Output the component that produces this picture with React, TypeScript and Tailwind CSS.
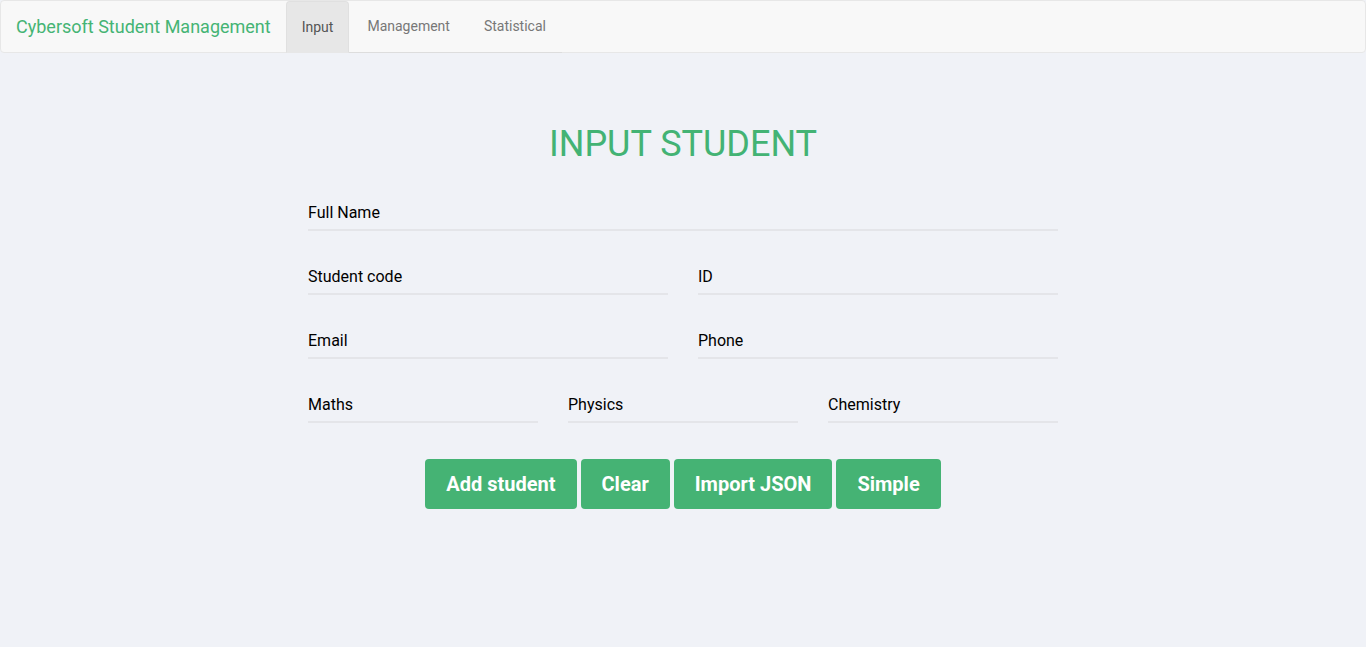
export default function App() {
  const field = "flex flex-col";
  const label = "text-[16px] leading-[26px] text-black pb-[3px] border-b-2 border-[#e4e5e9]";

  return (
    <div className="min-h-screen bg-[#f0f2f7] font-['Roboto',sans-serif]">
      {/* Navbar */}
      <nav className="h-[53px] flex bg-[#f8f8f8] border border-[#e7e7e7] rounded-[4px]">
        <div className="px-[15px] flex items-center text-[18px] text-[#45b474]">
          Cybersoft Student Management
        </div>
        <ul className="flex border-b border-[#dddddd] h-[52px]">
          <li className="mr-[2px] -mb-px">
            <a className="h-[52px] flex items-center px-[15px] text-[14px] text-[#555555] bg-[#e7e7e7] border border-[#e0e0e0] border-b-transparent rounded-t-[4px]">
              Input
            </a>
          </li>
          <li className="mr-[2px]">
            <a className="h-[51px] flex items-center px-[15px] text-[14px] text-[#777777] border border-transparent">
              Management
            </a>
          </li>
          <li>
            <a className="h-[51px] flex items-center px-[15px] text-[14px] text-[#777777] border border-transparent">
              Statistical
            </a>
          </li>
        </ul>
      </nav>

      {/* Form */}
      <main className="w-[750px] mx-auto pt-[71px]">
        <h1 className="text-center text-[36px] leading-[40px] text-[#43b374] font-normal">INPUT STUDENT</h1>

        <div className="mt-[36px] flex flex-col gap-[33px]">
          <div className={field}>
            <div className={label}>Full Name</div>
          </div>

          <div className="grid grid-cols-2 gap-x-[30px]">
            <div className={field}>
              <div className={label}>Student code</div>
            </div>
            <div className={field}>
              <div className={label}>ID</div>
            </div>
          </div>

          <div className="grid grid-cols-2 gap-x-[30px]">
            <div className={field}>
              <div className={label}>Email</div>
            </div>
            <div className={field}>
              <div className={label}>Phone</div>
            </div>
          </div>

          <div className="grid grid-cols-3 gap-x-[30px]">
            <div className={field}>
              <div className={label}>Maths</div>
            </div>
            <div className={field}>
              <div className={label}>Physics</div>
            </div>
            <div className={field}>
              <div className={label}>Chemistry</div>
            </div>
          </div>
        </div>

        <div className="mt-[36px] flex justify-center gap-[4px]">
          <button className="h-[50px] px-[21px] bg-[#45b374] text-white text-[20px] font-bold rounded-[4px]">Add student</button>
          <button className="h-[50px] px-[21px] bg-[#45b374] text-white text-[20px] font-bold rounded-[4px]">Clear</button>
          <button className="h-[50px] px-[21px] bg-[#45b374] text-white text-[20px] font-bold rounded-[4px]">Import JSON</button>
          <button className="h-[50px] px-[21px] bg-[#45b374] text-white text-[20px] font-bold rounded-[4px]">Simple</button>
        </div>
      </main>
    </div>
  );
}
